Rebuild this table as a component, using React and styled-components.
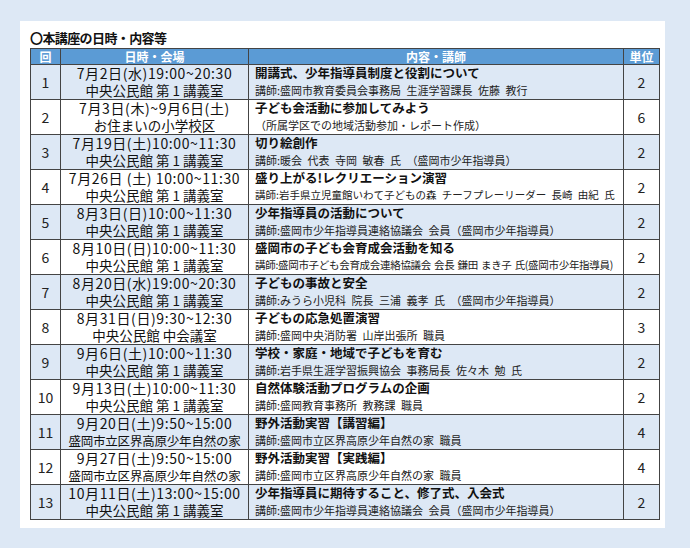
import React from 'react'
import styled, { createGlobalStyle, css } from 'styled-components'

const GlobalStyle = createGlobalStyle`
    body {
        margin: 0;
        background: #dde8f5;
        font-family: 'Noto Sans CJK JP', 'Noto Sans', sans-serif;
        color: #111;
    }
`;

const lectures = [
    { no: 1, date: '7月2日(水)19:00~20:30', place: '中央公民館 第 1 講義室', title: '開講式、少年指導員制度と役割について', teacher: '講師:盛岡市教育委員会事務局 生涯学習課長 佐藤 教行', unit: 2 },
    { no: 2, date: '7月3日(木)~9月6日(土)', place: 'お住まいの小学校区', title: '子ども会活動に参加してみよう', teacher: '（所属学区での地域活動参加・レポート作成）', unit: 6 },
    { no: 3, date: '7月19日(土)10:00~11:30', place: '中央公民館 第 1 講義室', title: '切り絵創作', teacher: '講師:暖会 代表 寺岡 敏春 氏 （盛岡市少年指導員）', unit: 2 },
    { no: 4, date: '7月26日 (土) 10:00~11:30', place: '中央公民館 第 1 講義室', title: '盛り上がる!レクリエーション演習', teacher: '講師:岩手県立児童館いわて子どもの森 チーフプレーリーダー 長崎 由紀 氏', unit: 2, fit: 'long' },
    { no: 5, date: '8月3日(日)10:00~11:30', place: '中央公民館 第 1 講義室', title: '少年指導員の活動について', teacher: '講師:盛岡市少年指導員連絡協議会 会員（盛岡市少年指導員）', unit: 2 },
    { no: 6, date: '8月10日(日)10:00~11:30', place: '中央公民館 第 1 講義室', title: '盛岡市の子ども会育成会活動を知る', teacher: '講師:盛岡市子ども会育成会連絡協議会 会長 鎌田 まき子 氏(盛岡市少年指導員)', unit: 2, fit: 'tight' },
    { no: 7, date: '8月20日(水)19:00~20:30', place: '中央公民館 第 1 講義室', title: '子どもの事故と安全', teacher: '講師:みうら小児科 院長 三浦 義孝 氏 （盛岡市少年指導員）', unit: 2 },
    { no: 8, date: '8月31日(日)9:30~12:30', place: '中央公民館 中会議室', title: '子どもの応急処置演習', teacher: '講師:盛岡中央消防署 山岸出張所 職員', unit: 3 },
    { no: 9, date: '9月6日(土)10:00~11:30', place: '中央公民館 第 1 講義室', title: '学校・家庭・地域で子どもを育む', teacher: '講師:岩手県生涯学習振興協会 事務局長 佐々木 勉 氏', unit: 2 },
    { no: 10, date: '9月13日(土)10:00~11:30', place: '中央公民館 第 1 講義室', title: '自然体験活動プログラムの企画', teacher: '講師:盛岡教育事務所 教務課 職員', unit: 2 },
    { no: 11, date: '9月20日(土)9:50~15:00', place: '盛岡市立区界高原少年自然の家', small: true, title: '野外活動実習【講習編】', teacher: '講師:盛岡市立区界高原少年自然の家 職員', unit: 4 },
    { no: 12, date: '9月27日(土)9:50~15:00', place: '盛岡市立区界高原少年自然の家', small: true, title: '野外活動実習【実践編】', teacher: '講師:盛岡市立区界高原少年自然の家 職員', unit: 4 },
    { no: 13, date: '10月11日(土)13:00~15:00', place: '中央公民館 第 1 講義室', title: '少年指導員に期待すること、修了式、入会式', teacher: '講師:盛岡市少年指導員連絡協議会 会員（盛岡市少年指導員）', unit: 2 },
];

export default function App() {
  return (
    <Page>
        <GlobalStyle />
        <Card>
            <Heading>〇本講座の日時・内容等</Heading>
            <Grid>
                <HeadCell>回</HeadCell>
                <HeadCell>日時・会場</HeadCell>
                <HeadCell>内容・講師</HeadCell>
                <HeadCell>単位</HeadCell>
                {lectures.map((item) => {
                    const tinted = item.no % 2 === 1;
                    return (
                        <Row key={item.no}>
                            <NumCell $tinted={tinted}>{item.no}</NumCell>
                            <DateCell $tinted={tinted}>
                                <DateLine>{item.date}</DateLine>
                                <PlaceLine $small={item.small}>{item.place}</PlaceLine>
                            </DateCell>
                            <ContentCell $tinted={tinted}>
                                <Title>{item.title}</Title>
                                <Teacher $fit={item.fit}>{item.teacher}</Teacher>
                            </ContentCell>
                            <NumCell $tinted={tinted}>{item.unit}</NumCell>
                        </Row>
                    );
                })}
            </Grid>
        </Card>
    </Page>
  )
}

const Page = styled.div`
    padding: 21px 25px 20px 20px;
    width: 690px;
    height: 548px;
    box-sizing: border-box;
`;

const Card = styled.div`
    background: #ffffff;
    height: 507px;
    box-sizing: border-box;
    padding: 6px 6px 7px 10px;
`;

const Heading = styled.div`
    font-size: 13px;
    font-weight: 700;
    line-height: 21px;
    height: 21px;
    letter-spacing: -0.6px;
`;

const Grid = styled.div`
    display: grid;
    grid-template-columns: 30px 188px 375px 36px;
    grid-template-rows: 16px repeat(13, 35px);
    width: 630px;
    box-sizing: border-box;
    border-top: 1px solid #444;
    border-left: 1px solid #444;
`;

const Row = styled.div`
    display: contents;
`;

const Cell = styled.div`
    box-sizing: border-box;
    border-right: 1px solid #444;
    border-bottom: 1px solid #444;
    background: ${(p) => (p.$tinted ? '#dde8f5' : '#ffffff')};
    display: flex;
    flex-direction: column;
    justify-content: center;
    min-width: 0;
`;

const HeadCell = styled(Cell)`
    background: #5b9bd5;
    color: #ffffff;
    font-size: 12px;
    font-weight: 700;
    line-height: 15px;
    align-items: center;
`;

const NumCell = styled(Cell)`
    align-items: center;
    font-size: 14px;
    line-height: 17px;
    color: #222;
`;

const DateCell = styled(Cell)`
    align-items: center;
    padding-bottom: 1px;
`;

const DateLine = styled.div`
    font-size: 14px;
    line-height: 17px;
    letter-spacing: 0.6px;
    white-space: nowrap;
`;

const PlaceLine = styled.div`
    font-size: ${(p) => (p.$small ? '12.5px' : '13.5px')};
    line-height: 17px;
    letter-spacing: ${(p) => (p.$small ? '-0.2px' : '0')};
    white-space: nowrap;
`;

const ContentCell = styled(Cell)`
    align-items: flex-start;
    padding: 0 0 0 6px;
`;

const Title = styled.div`
    font-size: 12.5px;
    font-weight: 700;
    line-height: 16px;
    white-space: nowrap;
`;

const fits = {
    long: css`
        font-size: 10.5px;
        word-spacing: 3px;
    `,
    tight: css`
        font-size: 10.5px;
        word-spacing: 1px;
        letter-spacing: -0.3px;
    `,
};

const Teacher = styled.div`
    font-size: 11px;
    line-height: 18px;
    white-space: nowrap;
    color: #222;
    word-spacing: 3px;
    ${(p) => fits[p.$fit]}
`;
